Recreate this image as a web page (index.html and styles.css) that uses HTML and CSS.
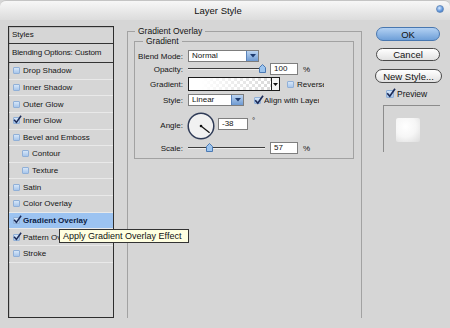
FILE: index.html
```html
<!DOCTYPE html>
<html lang="en">
<head>
    <meta charset="UTF-8">
    <meta name="viewport" content="width=device-width, initial-scale=1.0">
    <title>Layer Style</title>
    <link rel="stylesheet" href="styles.css">
</head>
<body>
    <div class="window">
        <div class="titlebar">
            <span class="title">Layer Style</span>
            <span class="orb"></span>
        </div>

        <div class="main">
            <!-- effects list -->
            <div class="styles-list">
                <div class="list-head">Styles</div>
                <div class="list-head blending">Blending Options: Custom</div>
                <div class="item"><span class="cb"></span>Drop Shadow</div>
                <div class="item"><span class="cb"></span>Inner Shadow</div>
                <div class="item"><span class="cb"></span>Outer Glow</div>
                <div class="item"><span class="cb"><svg viewBox="0 0 10 10" width="9" height="9"><path d="M1.2 5.2 L3.8 8.2 L9 0.8" fill="none" stroke="#1c2b58" stroke-width="1.7"/></svg></span>Inner Glow</div>
                <div class="item"><span class="cb"></span>Bevel and Emboss</div>
                <div class="item sub"><span class="cb"></span>Contour</div>
                <div class="item sub"><span class="cb"></span>Texture</div>
                <div class="item"><span class="cb"></span>Satin</div>
                <div class="item"><span class="cb"></span>Color Overlay</div>
                <div class="item selected"><span class="cb"><svg viewBox="0 0 10 10" width="9" height="9"><path d="M1.2 5.2 L3.8 8.2 L9 0.8" fill="none" stroke="#1c2b58" stroke-width="1.7"/></svg></span>Gradient Overlay</div>
                <div class="item"><span class="cb"><svg viewBox="0 0 10 10" width="9" height="9"><path d="M1.2 5.2 L3.8 8.2 L9 0.8" fill="none" stroke="#1c2b58" stroke-width="1.7"/></svg></span>Pattern Overlay</div>
                <div class="item"><span class="cb"></span>Stroke</div>
            </div>

            <!-- settings -->
            <fieldset class="group">
                <legend>Gradient Overlay</legend>
                <fieldset class="group inner">
                    <legend>Gradient</legend>

                    <div class="row row-blend">
                        <label>Blend Mode:</label>
                        <div class="select blend-select">
                            <span class="value">Normal</span>
                            <span class="drop"><svg viewBox="0 0 6 4" width="6" height="4"><path d="M0 0 H6 L3 3.5 Z" fill="#1d3a6e"/></svg></span>
                        </div>
                    </div>

                    <div class="row row-opacity">
                        <label>Opacity:</label>
                        <div class="slider">
                            <div class="track"></div>
                            <svg class="thumb" style="left: 74px" viewBox="0 0 7 9" width="7" height="9"><path d="M0.5 3.5 L3.5 0.5 L6.5 3.5 V8.5 H0.5 Z" fill="#9cc4ee" stroke="#4b79b3"/></svg>
                        </div>
                        <div class="num">100</div>
                        <span class="unit">%</span>
                    </div>

                    <div class="row row-gradient">
                        <label>Gradient:</label>
                        <div class="gradient">
                            <div class="ramp"></div>
                            <span class="ramp-drop"><svg viewBox="0 0 5 3" width="5" height="3"><path d="M0 0 H5 L2.5 3 Z" fill="#111"/></svg></span>
                        </div>
                        <span class="cb reverse-cb"></span>
                        <span class="clip reverse">Reverse</span>
                    </div>

                    <div class="row row-style">
                        <label>Style:</label>
                        <div class="select style-select">
                            <span class="value">Linear</span>
                            <span class="drop"><svg viewBox="0 0 6 4" width="6" height="4"><path d="M0 0 H6 L3 3.5 Z" fill="#1d3a6e"/></svg></span>
                        </div>
                        <span class="cb align-cb"><svg viewBox="0 0 10 10" width="10" height="10"><path d="M1.2 5.2 L3.8 8.2 L9 0.8" fill="none" stroke="#1c2b58" stroke-width="1.7"/></svg></span>
                        <span class="clip align">Align with Layer</span>
                    </div>

                    <div class="row row-angle">
                        <label>Angle:</label>
                        <svg class="dial" viewBox="0 0 28 28" width="28" height="28">
                            <circle cx="14" cy="14" r="12.8" fill="#f1f1f1" stroke="#2f3b57" stroke-width="1.5"/>
                            <line x1="14" y1="14" x2="22.6" y2="20.7" stroke="#111" stroke-width="1.2"/>
                            <circle cx="14" cy="14" r="1.3" fill="#111"/>
                        </svg>
                        <div class="num angle-num">-38</div>
                        <span class="deg">°</span>
                    </div>

                    <div class="row row-scale">
                        <label>Scale:</label>
                        <div class="slider">
                            <div class="track"></div>
                            <svg class="thumb" style="left: 21px" viewBox="0 0 7 9" width="7" height="9"><path d="M0.5 3.5 L3.5 0.5 L6.5 3.5 V8.5 H0.5 Z" fill="#9cc4ee" stroke="#4b79b3"/></svg>
                        </div>
                        <div class="num">57</div>
                        <span class="unit">%</span>
                    </div>
                </fieldset>
            </fieldset>

            <!-- buttons and preview -->
            <div class="actions">
                <button class="btn primary btn-ok">OK</button>
                <button class="btn btn-cancel">Cancel</button>
                <button class="btn btn-new">New Style...</button>
                <div class="preview-check">
                    <span class="cb"><svg viewBox="0 0 10 10" width="10" height="10"><path d="M1.2 5.2 L3.8 8.2 L9 0.8" fill="none" stroke="#1c2b58" stroke-width="1.7"/></svg></span>Preview
                </div>
                <div class="preview-box">
                    <div class="swatch"></div>
                </div>
            </div>
        </div>

        <div class="tooltip">Apply Gradient Overlay Effect</div>
    </div>
</body>
</html>
```

FILE: styles.css
```css
body {
    margin: 0;
    background-color: #d6d6d6;
    font-family: "Liberation Sans", Arial, sans-serif;
    font-size: 8px;
    color: #141414;
}
.window {
    position: relative;
    width: 450px;
    height: 328px;
    overflow: hidden;
}
.titlebar {
    height: 20px;
    display: flex;
    align-items: center;
    background: linear-gradient(#f7f7f7, #dcdcdc);
    border-radius: 6px 6px 0 0;
    border-top: 1px solid #c4c4c4;
    box-sizing: border-box;
}
.title {
    flex: 1;
    text-align: center;
    font-size: 9.5px;
    color: #111;
}
.orb {
    width: 8px;
    height: 8px;
    margin-right: 6px;
    margin-bottom: 3px;
    border-radius: 50%;
    box-sizing: border-box;
    border: 1px solid #6a8fbe;
    background: radial-gradient(circle at 40% 35%, #d8eaff, #5b93dc 60%, #2d5fa3);
}
.main {
    display: flex;
    align-items: flex-start;
    padding: 6px 0 0 8px;
}

/* left list */
.styles-list {
    width: 106px;
    height: 292px;
    box-sizing: border-box;
    border: 1px solid #2e2e2e;
    margin-right: 13px;
    box-shadow: inset 1px 1px 0 #bcbcbc;
}
.list-head {
    height: 16px;
    line-height: 16px;
    padding-left: 3px;
    border-bottom: 1px solid #333;
}
.list-head.blending {
    height: 18px;
    line-height: 18px;
    letter-spacing: -0.15px;
}
.item {
    height: 16.64px;
    box-sizing: border-box;
    display: flex;
    align-items: center;
    padding-left: 4px;
    border-bottom: 1px solid #e9e9e9;
}
.item.sub {
    padding-left: 13px;
}
.item.selected {
    background-color: #9cc3f1;
    font-weight: bold;
    color: #0d1d45;
}
.cb {
    position: relative;
    flex: none;
    width: 7px;
    height: 7px;
    box-sizing: border-box;
    margin-right: 3px;
    border: 1px solid #90b0d8;
    border-radius: 1px;
    background: linear-gradient(#d6e6f8, #a8c6eb);
}
.cb svg {
    position: absolute;
    left: -1px;
    top: -3px;
}

/* group boxes */
.group {
    margin: 0;
    padding: 0 7px 0 6px;
    width: 235px;
    height: 292px;
    box-sizing: border-box;
    min-width: 0;
    border: 1px solid #a2a2a2;
    border-bottom: none;
}
.group legend {
    margin-left: 1px;
    padding: 0 3px;
    font-size: 8.5px;
    line-height: 10px;
}
.group.inner {
    width: 220px;
    height: auto;
    padding: 4px 0 4px 0;
    border-bottom: 1px solid #a2a2a2;
}
.group.inner legend {
    margin-left: 8px;
}
.row {
    display: flex;
    align-items: center;
    height: 12px;
}
.row label {
    width: 48px;
    margin-right: 5px;
    text-align: right;
    flex: none;
}
.row-opacity { margin-top: 1px; }
.row-gradient { margin-top: 2px; height: 14px; }
.row-style { margin-top: 3px; }
.row-angle { margin-top: 5px; height: 29px; }
.row-scale { margin-top: 2px; }

.select {
    display: flex;
    height: 12px;
    box-sizing: border-box;
    border: 1px solid #7d7d7d;
    background-color: #fff;
}
.blend-select { width: 71px; }
.style-select { width: 56px; }
.select .value {
    flex: 1;
    padding-left: 3px;
    line-height: 10px;
}
.drop {
    width: 11px;
    display: flex;
    align-items: center;
    justify-content: center;
    border-left: 1px solid #5b84bb;
    background: linear-gradient(#bcd5f2, #6e9ad2);
}
.slider {
    position: relative;
    width: 77px;
    height: 12px;
    margin-right: 5px;
    display: flex;
    align-items: center;
}
.track {
    flex: 1;
    height: 1px;
    background-color: #3c3c3c;
    border-bottom: 1px solid #eeeeee;
}
.thumb {
    position: absolute;
    top: 1px;
    margin-left: -3px;
}
.num {
    width: 28px;
    height: 12px;
    box-sizing: border-box;
    padding-left: 3px;
    line-height: 10px;
    border: 1px solid #7f7f7f;
    background-color: #fff;
}
.unit {
    margin-left: 5px;
}
.gradient {
    display: flex;
    width: 92px;
    height: 14px;
    box-sizing: border-box;
    border: 1px solid #1c1c1c;
}
.ramp {
    flex: 1;
    background:
        linear-gradient(to right, #ffffff 15%, rgba(255,255,255,0) 100%),
        repeating-conic-gradient(#d9d9d9 0 25%, #ffffff 0 50%) 0 0 / 6px 6px;
}
.ramp-drop {
    width: 7px;
    display: flex;
    align-items: center;
    justify-content: center;
    border-left: 1px solid #1c1c1c;
    background-color: #f4f4f4;
}
.reverse-cb {
    margin-left: 7px;
}
.clip {
    overflow: hidden;
    white-space: nowrap;
}
.reverse { width: 27px; }
.align-cb { margin-left: 10px; }
.align { width: 55px; }
.dial {
    flex: none;
    margin-left: -1px;
}
.angle-num {
    width: 30px;
    margin-left: 3px;
    margin-top: -3px;
}
.deg {
    margin-left: 4px;
    margin-top: -11px;
}

/* right column */
.actions {
    width: 66px;
    margin-left: 14px;
    display: flex;
    flex-direction: column;
}
.btn {
    width: 64px;
    height: 13px;
    padding: 0;
    border: 1px solid #4a4a4a;
    border-radius: 7px;
    background: linear-gradient(#ffffff, #e2e2e2);
    font-family: inherit;
    font-size: 9.5px;
    line-height: 11px;
    color: #111;
}
.btn.primary {
    background: linear-gradient(#b3d1f3, #6e9fd8);
    border-color: #4877b0;
}
.btn-ok { margin-top: 1px; height: 14px; }
.btn-cancel { margin-top: 7px; }
.btn-new {
    margin-top: 8px;
    margin-left: -1px;
    width: 67px;
    height: 14px;
}
.preview-check {
    display: flex;
    align-items: center;
    margin-top: 6px;
    padding-left: 10px;
    height: 9px;
    font-size: 8.5px;
}
.preview-check .cb {
    width: 8px;
    height: 8px;
}
.preview-box {
    margin-top: 7px;
    margin-left: 7px;
    width: 57px;
    height: 47px;
    box-sizing: border-box;
    padding: 12px 0 0 12px;
    border-left: 1px solid #8c8c8c;
    border-top: 1px solid #8c8c8c;
}
.swatch {
    width: 24px;
    height: 24px;
    border-radius: 2px;
    background: radial-gradient(circle at 40% 35%, #ffffff, #f6f6f6 50%, #dcdcdc 100%);
}

.tooltip {
    position: absolute;
    left: 59px;
    top: 229px;
    width: 130px;
    height: 14px;
    box-sizing: border-box;
    padding-left: 3px;
    border: 1px solid #333;
    background-color: #ffffe1;
    font-size: 9px;
    line-height: 12px;
    color: #111;
}
```
